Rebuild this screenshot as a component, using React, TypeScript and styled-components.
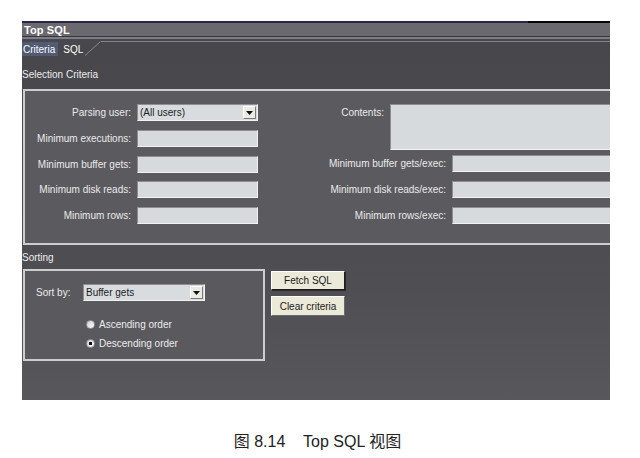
import React from "react";
import styled, { createGlobalStyle } from "styled-components";

const GlobalStyle = createGlobalStyle`
  html, body { margin: 0; padding: 0; background: #ffffff; }
  body { font-family: "Liberation Sans", Arial, sans-serif; }
  * { box-sizing: border-box; }
`;

const Page = styled.div`
  width: 640px;
  height: 458px;
  padding-top: 21px;
  display: flex;
  flex-direction: column;
  background: #ffffff;
`;

const Window = styled.div`
  margin-left: 22px;
  width: 588px;
  height: 379px;
  display: flex;
  flex-direction: column;
  overflow: hidden;
  background: linear-gradient(#47474b, #4f4f53 70%, #58585c);
  font-family: "Liberation Sans", Arial, sans-serif;
  font-size: 10px;
  color: #e6e6e6;
`;

const TitleBar = styled.div`
  height: 16px;
  padding: 2px 0 0 2px;
  display: flex;
  align-items: center;
  background:
    linear-gradient(to right, #26264e 0 86%, #050505 86%) top / 100% 2px no-repeat,
    #6a6a6e;
  border-bottom: 1px solid #37373b;
`;

const Title = styled.span`
  font-weight: bold;
  font-size: 11px;
  color: #ffffff;
  letter-spacing: 0.1px;
`;

const TabStrip = styled.div`
  height: 19px;
  display: flex;
  align-items: flex-end;
  border-top: 2px solid #7c7c8a;
  background: #48484c;
`;

const Tab = styled.div<{ $active?: boolean }>`
  height: 14px;
  display: flex;
  align-items: center;
  padding: ${(p) => (p.$active ? "0 3px 0 1px" : "0 2px 0 5px")};
  background: ${(p) => (p.$active ? "#515b73" : "transparent")};
  color: #ffffff;
  font-size: 10px;
`;

const TabFill = styled.div`
  flex: 1;
  align-self: stretch;
  margin-top: 2px;
  border-top: 1px solid #84848f;
`;

const Content = styled.div`
  display: flex;
  flex-direction: column;
  flex: 1;
`;

const SectionLabel = styled.div<{ $top: number }>`
  margin-top: ${(p) => p.$top}px;
  height: 12px;
  line-height: 12px;
  color: #ececec;
  font-size: 10px;
`;

const GroupBox = styled.div`
  margin: 8px 0 0 1px;
  width: 640px;
  height: 156px;
  border: 2px solid #cdcdd0;
  border-right: none;
  background: #5b5b5f;
  display: flex;
  padding-top: 13px;
`;

const Column = styled.div`
  display: flex;
  flex-direction: column;
  gap: 8.75px;
`;

const RightColumn = styled(Column)`
  gap: 5px;
`;

const RightRows = styled(Column)``;

const Field = styled.div<{ $top?: boolean }>`
  display: flex;
  align-items: ${(p) => (p.$top ? "flex-start" : "center")};
  gap: 6px;
`;

const Label = styled.span<{ $w: number; $pt?: number }>`
  width: ${(p) => p.$w}px;
  text-align: right;
  white-space: nowrap;
  padding-top: ${(p) => p.$pt ?? 0}px;
  color: #eaeaea;
`;

const TextBox = styled.div<{ $w: number; $h?: number }>`
  width: ${(p) => p.$w}px;
  height: ${(p) => p.$h ?? 17}px;
  background: #d6dadd;
  border: 1px solid;
  border-color: #8e8e92 #f2f2f2 #f2f2f2 #8e8e92;
`;

const Select = styled.div<{ $w: number }>`
  width: ${(p) => p.$w}px;
  height: 17px;
  display: flex;
  align-items: center;
  background: #d8dcdf;
  border: 1px solid;
  border-color: #8e8e92 #f2f2f2 #f2f2f2 #8e8e92;
  color: #1c1c1c;
  padding-left: 2px;
`;

const SelectText = styled.span`
  flex: 1;
  white-space: nowrap;
`;

const DropButton = styled.span`
  width: 13px;
  height: 13px;
  margin-right: 1px;
  display: flex;
  align-items: center;
  justify-content: center;
  background: #ebebe4;
  border: 1px solid;
  border-color: #ffffff #7a7a7a #7a7a7a #ffffff;
`;

const SortSection = styled.div`
  margin-top: 5px;
  display: flex;
  align-items: flex-start;
  gap: 6px;
`;

const SortBox = styled.div`
  margin-left: 1px;
  width: 242px;
  height: 92px;
  border: 2px solid #cdcdd0;
  background: #5a5a5e;
  padding: 13px 0 0 11px;
  display: flex;
  flex-direction: column;
`;

const SortRow = styled.div`
  display: flex;
  align-items: center;
`;

const SortLabel = styled.span`
  width: 47px;
  color: #eaeaea;
`;

const RadioGroup = styled.div`
  margin: 16px 0 0 50px;
  display: flex;
  flex-direction: column;
  gap: 5px;
`;

const RadioRow = styled.label`
  height: 14px;
  display: flex;
  align-items: center;
  gap: 4px;
  color: #ececec;
`;

const RadioDot = styled.span<{ $checked?: boolean }>`
  width: 9px;
  height: 9px;
  border-radius: 50%;
  background: radial-gradient(circle, #111 0 1.6px, transparent 2px) center / ${(p) =>
      p.$checked ? "100% 100%" : "0 0"} no-repeat,
    linear-gradient(135deg, #d0d0d0, #ffffff);
  border: 1px solid #9a9a9a;
`;

const ButtonColumn = styled.div`
  margin-top: 2px;
  display: flex;
  flex-direction: column;
  gap: 6px;
`;

const Button = styled.div<{ $h: number; $strong?: boolean }>`
  width: 74px;
  height: ${(p) => p.$h}px;
  display: flex;
  align-items: center;
  justify-content: center;
  background: #ebe9d8;
  color: #1a1a1a;
  border: 1px solid;
  border-color: #ffffff ${(p) => (p.$strong ? "#1e1e1e" : "#6a6a6a")}
    ${(p) => (p.$strong ? "#1e1e1e" : "#6a6a6a")} #ffffff;
  box-shadow: ${(p) => (p.$strong ? "1px 1px 0 #2a2a2a" : "none")};
`;

const Caption = styled.div`
  margin-top: 28px;
  text-align: center;
  white-space: pre;
  font-family: "Liberation Sans", "Noto Sans CJK SC", sans-serif;
  font-size: 16px;
  color: #222222;
  padding-right: 5px;
`;

const Arrow = () => (
  <svg width="7" height="4" viewBox="0 0 7 4">
    <path d="M0 0h7L3.5 4z" fill="#111" />
  </svg>
);

const TabSlant = () => (
  <svg width="16" height="16" viewBox="0 0 16 16" style={{ display: "block" }}>
    <path d="M0 15.5L15.5 1.5" stroke="#86868f" strokeWidth="1" fill="none" />
  </svg>
);

const leftFields = [
  "Minimum executions:",
  "Minimum buffer gets:",
  "Minimum disk reads:",
  "Minimum rows:",
];

const rightFields = [
  "Minimum buffer gets/exec:",
  "Minimum disk reads/exec:",
  "Minimum rows/exec:",
];

export default function App() {
  return (
    <Page>
      <GlobalStyle />
      <Window>
        <TitleBar>
          <Title>Top SQL</Title>
        </TitleBar>
        <TabStrip>
          <Tab $active>Criteria</Tab>
          <Tab>SQL</Tab>
          <TabSlant />
          <TabFill />
        </TabStrip>
        <Content>
          <SectionLabel $top={13}>Selection Criteria</SectionLabel>
          <GroupBox>
            <Column>
              <Field>
                <Label $w={106}>Parsing user:</Label>
                <Select $w={121}>
                  <SelectText>(All users)</SelectText>
                  <DropButton>
                    <Arrow />
                  </DropButton>
                </Select>
              </Field>
              {leftFields.map((f) => (
                <Field key={f}>
                  <Label $w={106}>{f}</Label>
                  <TextBox $w={121} />
                </Field>
              ))}
            </Column>
            <RightColumn>
              <Field $top>
                <Label $w={126} $pt={3}>
                  Contents:
                </Label>
                <TextBox $w={260} $h={46} />
              </Field>
              <RightRows>
                {rightFields.map((f) => (
                  <Field key={f}>
                    <Label $w={188}>{f}</Label>
                    <TextBox $w={200} />
                  </Field>
                ))}
              </RightRows>
            </RightColumn>
          </GroupBox>
          <SectionLabel $top={7}>Sorting</SectionLabel>
          <SortSection>
            <SortBox>
              <SortRow>
                <SortLabel>Sort by:</SortLabel>
                <Select $w={122}>
                  <SelectText>Buffer gets</SelectText>
                  <DropButton>
                    <Arrow />
                  </DropButton>
                </Select>
              </SortRow>
              <RadioGroup>
                <RadioRow>
                  <RadioDot />
                  Ascending order
                </RadioRow>
                <RadioRow>
                  <RadioDot $checked />
                  Descending order
                </RadioRow>
              </RadioGroup>
            </SortBox>
            <ButtonColumn>
              <Button $h={19} $strong>
                Fetch SQL
              </Button>
              <Button $h={20}>Clear criteria</Button>
            </ButtonColumn>
          </SortSection>
        </Content>
      </Window>
      <Caption>{"图 8.14    Top SQL 视图"}</Caption>
    </Page>
  );
}
